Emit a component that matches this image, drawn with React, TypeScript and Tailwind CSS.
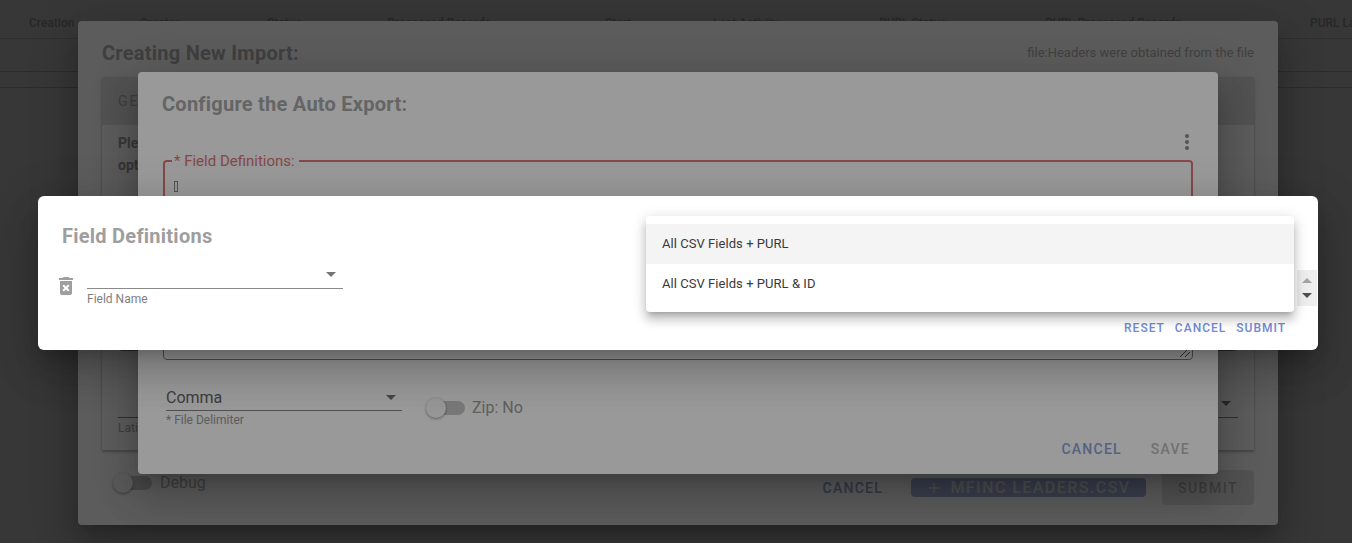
import { Plus } from 'lucide-react';

const modalShadow = 'shadow-[0_11px_15px_-7px_rgba(0,0,0,0.2),0_24px_38px_3px_rgba(0,0,0,0.14),0_9px_46px_8px_rgba(0,0,0,0.12)]';

const Caret = ({ className }: { className?: string }) => (
    <span className={`block w-0 h-0 border-x-[5px] border-x-transparent border-t-[5px] border-t-[#757575] ${className ?? ''}`}></span>
);

const Switch = ({ label, className }: { label: string; className: string }) => (
    <div className="flex items-center">
        <div className="relative w-[39px] h-[20px] flex items-center">
            <div className="ml-[1px] w-[38px] h-[14px] rounded-full bg-[#c8c8c8]"></div>
            <div className="absolute left-0 top-0 size-[20px] rounded-full bg-[#fafafa] shadow-[0_1px_3px_rgba(0,0,0,0.4)]"></div>
        </div>
        <span className={`text-base ${className}`}>{label}</span>
    </div>
);

const Backdrop = () => <div className="absolute inset-0 bg-black/40"></div>;

const columns = [
    ['Creation', 'w-[111px]'],
    ['Creator', 'w-[127px]'],
    ['Status', 'w-[120px]'],
    ['Processed Records', 'w-[218px]'],
    ['Start', 'w-[108px]'],
    ['Last Activity', 'w-[166px]'],
    ['PURL Status', 'w-[166px]'],
    ['PURL Processed Records', 'w-[265px]'],
    ['PURL Last Activity', 'w-[200px]'],
];

export default function App() {
    return (
        <div className="relative w-[1352px] h-[543px] overflow-hidden bg-white text-[#212121] font-['Roboto',sans-serif]">
            {/* page behind the dialogs */}
            <div className="flex h-[39px] pl-[29px] items-center border-b border-[#dddddd] whitespace-nowrap">
                {columns.map(([name, w]) => (
                    <div key={name} className={`${w} shrink-0 text-xs font-medium text-[#b8b8b8] pt-[7px]`}>{name}</div>
                ))}
            </div>
            <div className="h-[33px] border-b border-[#cfcfcf]"></div>
            <div className="h-[16px] border-b border-[#cfcfcf]"></div>

            <Backdrop />
            <div className={`absolute left-[78px] top-[21px] w-[1200px] h-[504px] rounded bg-white px-[24px] ${modalShadow}`}>
                <div className="flex items-center justify-between h-[28px] mt-[18px]">
                    <h2 className="text-xl font-bold tracking-[0.25px] text-[#b0b0b0]">Creating New Import:</h2>
                    <span className="text-[13px] text-[#b4b4b4]">file:Headers were obtained from the file</span>
                </div>
                <div className="mt-[10px] h-[373px] flex flex-col shadow-[0_2px_2px_rgba(0,0,0,0.2),0_1px_5px_rgba(0,0,0,0.12)]">
                    <div className="h-[48px] shrink-0 bg-[#e4e4e4] px-[16px] flex items-center text-sm tracking-[2px] text-[#acacac]">GENERAL</div>
                    <div className="px-[16px] pt-[7px] text-sm font-bold leading-[22px] text-[#999999]">
                        <div>Please</div>
                        <div>options</div>
                        <div className="mt-[122px] h-[53px] border border-[#888888] rounded"></div>
                        <div className="mt-[66px] h-[1px] bg-[#888888] relative">
                            <Caret className="absolute right-[7px] -top-[16px]" />
                        </div>
                        <div className="text-xs font-normal leading-[20px] text-[#aaaaaa]">Latitude</div>
                    </div>
                </div>
                <div className="mt-[20px] flex items-center">
                    <div className="ml-[11px] mb-[9px]"><Switch label="Debug" className="ml-[8px] text-[#b0b0b0]" /></div>
                    <button className="ml-auto pt-[1px] text-sm font-medium tracking-[1.25px] text-[#8fa0d0]">CANCEL</button>
                    <button className="ml-[28px] w-[235px] h-[19px] rounded bg-[#a0aed8] flex items-center justify-center gap-[8px] text-base font-medium tracking-[1.45px] text-[#dcdcdc]">
                        <Plus size={16} strokeWidth={2} />
                        MFINC LEADERS.CSV
                    </button>
                    <button className="ml-[16px] w-[92px] h-[35px] rounded bg-black/10 text-sm font-medium tracking-[1.5px] text-black/25">SUBMIT</button>
                </div>
            </div>

            <Backdrop />
            <div className={`absolute left-[138px] top-[72px] w-[1080px] h-[402px] rounded bg-white px-[25px] ${modalShadow}`}>
                <h2 className="mt-[18px] h-[28px] text-xl leading-[28px] font-bold tracking-[0.25px] text-[#a8a8a8] -ml-[1px]">Configure the Auto Export:</h2>
                <div className="mt-[12px] flex justify-end">
                    <svg width="24" height="24" viewBox="0 0 24 24" fill="#8c8c8c" className="-mr-[6px]">
                        <circle cx="12" cy="6" r="2" />
                        <circle cx="12" cy="12" r="2" />
                        <circle cx="12" cy="18" r="2" />
                    </svg>
                </div>
                <fieldset className="mt-[-1px] h-[88px] border-2 border-[#e07878] rounded">
                    <legend className="ml-[7px] pl-[2px] pr-[4px] text-[15px] leading-[16px] text-[#e07878]">* Field Definitions:</legend>
                    <span className="block ml-[9px] mt-[12px] w-[4px] h-[11px] border border-[#8a8a8a]"></span>
                </fieldset>
                <div className="mt-[8px] h-[111px] border border-[#888888] rounded flex items-end justify-end">
                    <svg width="12" height="12" viewBox="0 0 12 12" stroke="#555555" strokeWidth="1" className="mb-[1px] mr-[1px]">
                        <path d="M1 11 L11 1 M6 11 L11 6" />
                    </svg>
                </div>
                <div className="mt-[24px] flex items-start">
                    <div className="ml-[3px] w-[236px]">
                        <div className="h-[27px] pt-[2px] border-b border-[#888888] flex items-center justify-between text-base text-[#666666]">
                            Comma
                            <Caret className="mr-[6px] -mt-[2px]" />
                        </div>
                        <div className="mt-[2px] text-xs leading-[14px] text-[#999999]">* File Delimiter</div>
                    </div>
                    <div className="ml-[24px] mt-[12px]"><Switch label="Zip: No" className="ml-[7px] text-[#a0a0a0]" /></div>
                </div>
                <div className="mt-[12px] flex justify-end gap-[29px] pr-[3px]">
                    <button className="text-sm font-medium tracking-[1.25px] text-[#8ea2dc]">CANCEL</button>
                    <button className="text-sm font-medium tracking-[1.25px] text-[#bdbdbd]">SAVE</button>
                </div>
            </div>

            <Backdrop />
            <div className={`absolute left-[38px] top-[196px] w-[1280px] h-[154px] rounded-md bg-white pl-[24px] pr-[1px] ${modalShadow}`}>
                <h2 className="pt-[26px] h-[54px] text-xl leading-[28px] font-bold tracking-[0.25px] text-[#9e9e9e]">Field Definitions</h2>
                <div className="mt-[14px] flex items-start h-[42px]">
                    <svg width="24" height="24" viewBox="0 0 24 24" fill="#9e9e9e" className="-ml-[8px] mt-[10px]">
                        <path d="M6 19c0 1.1.9 2 2 2h8c1.1 0 2-.9 2-2V7H6v12zm2.46-7.12l1.41-1.41L12 12.59l2.12-2.12 1.41 1.41L13.41 14l2.12 2.12-1.41 1.41L12 15.41l-2.12 2.12-1.41-1.41L10.59 14l-2.13-2.12zM15.5 4l-1-1h-5l-1 1H5v2h14V4z" />
                    </svg>
                    <div className="ml-[9px] w-[256px]">
                        <div className="h-[25px] pt-[8px] border-b border-[#8a8a8a] flex items-start justify-end">
                            <Caret className="mr-[7px]" />
                        </div>
                        <div className="mt-[3px] text-xs leading-[14px] text-[#808080]">Field Name</div>
                    </div>
                    <div className="ml-auto mt-[6px] w-[20px] h-[36px] bg-[#eeeeee] flex flex-col items-center justify-center gap-[10px]">
                        <span className="block w-0 h-0 border-x-[5px] border-x-transparent border-b-[5px] border-b-[#a3a3a3]"></span>
                        <span className="block w-0 h-0 border-x-[5px] border-x-transparent border-t-[5px] border-t-[#505050]"></span>
                    </div>
                </div>
                <div className="mt-[14px] flex justify-end gap-[10px] pr-[31px] text-xs font-medium tracking-[1px] text-[#7289d8]">
                    <button>RESET</button>
                    <button>CANCEL</button>
                    <button>SUBMIT</button>
                </div>
            </div>

            {/* open dropdown of presets */}
            <div className="absolute left-[646px] top-[216px] w-[648px] h-[96px] rounded bg-white py-[8px] shadow-[0_5px_5px_-3px_rgba(0,0,0,0.2),0_8px_10px_1px_rgba(0,0,0,0.14),0_3px_14px_2px_rgba(0,0,0,0.12)] text-[13px] tracking-[0.05px] text-[#3a3a3a]">
                <div className="h-[40px] px-[16px] flex items-center bg-[#f4f4f4]">All CSV Fields + PURL</div>
                <div className="h-[40px] px-[16px] flex items-center">All CSV Fields + PURL &amp; ID</div>
            </div>
        </div>
    );
}
